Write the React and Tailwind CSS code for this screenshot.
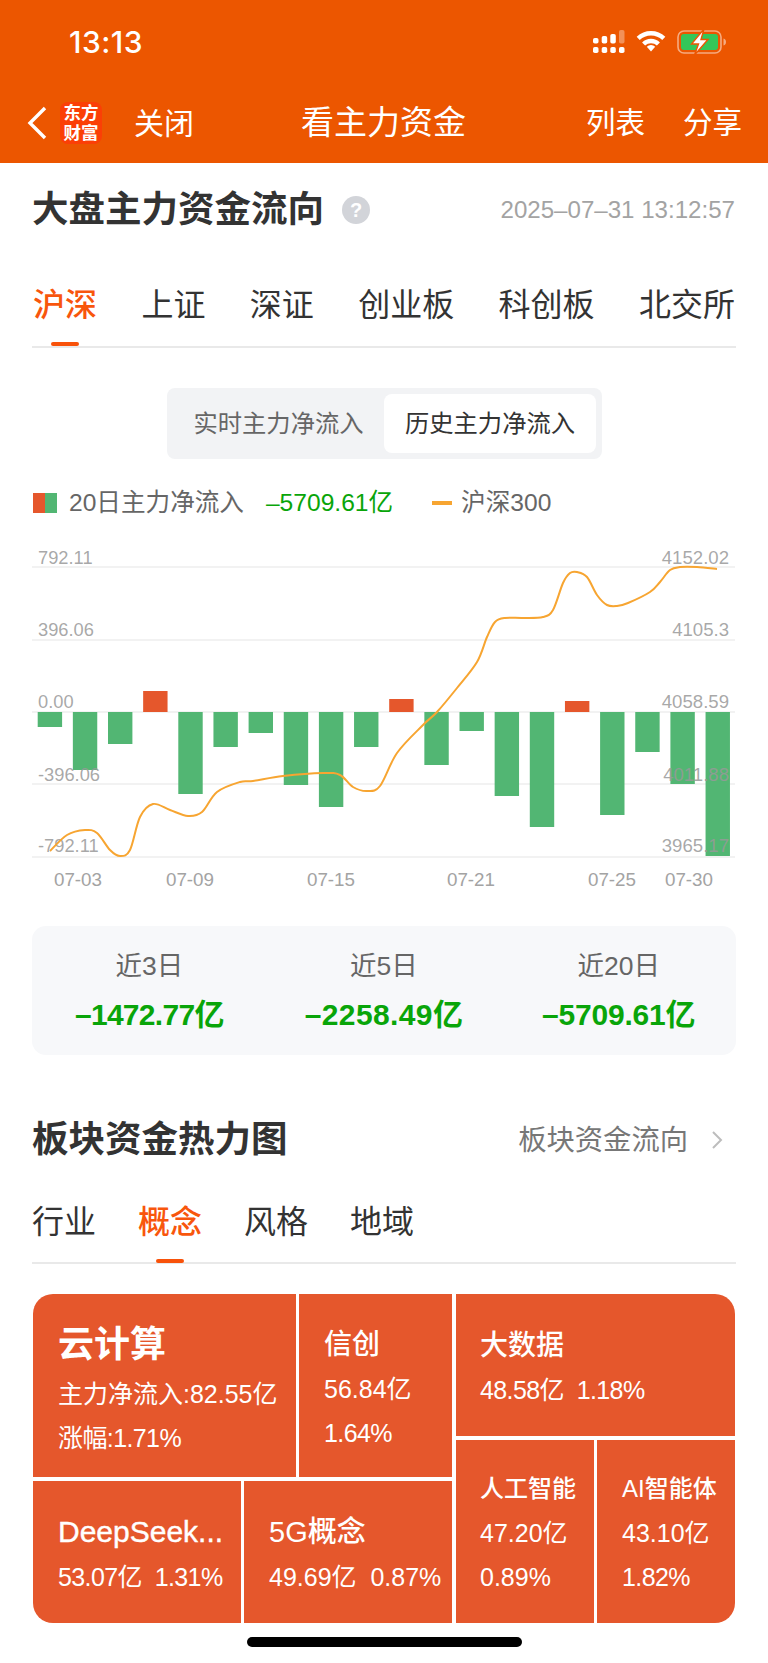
import { useMemo } from 'react'

const SANS = "font-['Liberation_Sans','Noto_Sans_CJK_SC',sans-serif]"

const bars = [-15, -58, -32, 21, -82, -35, -21, -73, -95, -35, 13, -53, -19, -84, -115, 11, -103, -40, -72, -144]

const indexLine = [
  [50, 851], [67, 835], [85, 830], [97, 833], [110, 850], [120, 856], [130, 850], [140, 817], [153, 804],
  [170, 810], [188, 816], [202, 812], [217, 792], [240, 782], [253, 781], [283, 776], [323, 773], [340, 775],
  [353, 787], [367, 791], [380, 786], [397, 753], [423, 725], [437, 712], [457, 688], [477, 662], [487, 637],
  [495, 622], [505, 618], [523, 618], [543, 617], [553, 610], [563, 583], [570, 573], [577, 572], [587, 577],
  [597, 595], [607, 605], [617, 606], [628, 603], [650, 592], [660, 582], [670, 570], [680, 567], [697, 567], [717, 569],
]

// catmull-rom through the points so the index line stays smooth
function smoothPath(pts) {
  let d = `M${pts[0][0]} ${pts[0][1]}`
  for (let i = 0; i < pts.length - 1; i++) {
    const p0 = pts[i - 1] || pts[i]
    const p1 = pts[i]
    const p2 = pts[i + 1]
    const p3 = pts[i + 2] || p2
    const c1x = p1[0] + (p2[0] - p0[0]) / 6
    const c1y = p1[1] + (p2[1] - p0[1]) / 6
    const c2x = p2[0] - (p3[0] - p1[0]) / 6
    const c2y = p2[1] - (p3[1] - p1[1]) / 6
    d += `C${c1x} ${c1y} ${c2x} ${c2y} ${p2[0]} ${p2[1]}`
  }
  return d
}

const gridY = [567, 640, 712, 784, 857]
const leftLabels = [['792.11', 564], ['396.06', 636], ['0.00', 708], ['-396.06', 781], ['-792.11', 852]]
const rightLabels = [['4152.02', 564], ['4105.3', 636], ['4058.59', 708], ['4011.88', 781], ['3965.17', 852]]
const dates = [['07-03', 78], ['07-09', 190], ['07-15', 331], ['07-21', 471], ['07-25', 612], ['07-30', 689]]

function FlowChart() {
  const line = useMemo(() => smoothPath(indexLine), [])
  // drawn in page coordinates, hence the viewBox offset
  return (
    <svg viewBox="0 540 768 360" className="block w-[768px] h-[360px] font-['Liberation_Sans',sans-serif]">
      {gridY.map(y => <rect key={y} x="32" y={y - 1} width="703" height="2" fill="#f2f2f2" />)}
      {bars.map((v, i) => (
        <rect
          key={i}
          x={37.7 + i * 35.15}
          y={v > 0 ? 712 - v : 712}
          width="24.4"
          height={Math.abs(v)}
          fill={v > 0 ? '#e5572c' : '#52b673'}
        />
      ))}
      {leftLabels.map(([t, y]) => <text key={t} x="38" y={y} fontSize="18.3" fill="#999" fillOpacity="0.85">{t}</text>)}
      {rightLabels.map(([t, y]) => <text key={t} x="729" y={y} fontSize="18.6" fill="#999" fillOpacity="0.85" textAnchor="end">{t}</text>)}
      <path d={line} fill="none" stroke="#f7a531" strokeWidth="2" />
      {dates.map(([t, x]) => <text key={t} x={x} y="886" fontSize="18.8" fill="#a3a3a3" textAnchor="middle">{t}</text>)}
    </svg>
  )
}

function SignalIcon() {
  return (
    <svg width="32" height="23" viewBox="0 0 32 23" fill="#fff">
      <rect x="0" y="8" width="5.500" height="5.500" rx="1.800" />
      <rect x="8.700" y="6" width="5.500" height="7.500" rx="1.800" />
      <rect x="17.300" y="4" width="5.500" height="9.500" rx="1.800" />
      <rect x="26" y="0" width="5.500" height="13.500" rx="1.800" fillOpacity="0.35" />
      {[0, 8.7, 17.3, 26].map(x => <rect key={x} x={x} y="17" width="5.500" height="6" rx="1.800" />)}
    </svg>
  )
}

function WifiIcon() {
  return (
    <svg width="30" height="22" viewBox="0 0 30 22" fill="none" stroke="#fff" strokeWidth="4.400">
      <path d="M2.200 8.400A18.500 18.500 0 0 1 27.800 8.400" />
      <path d="M7.600 14A10.700 10.700 0 0 1 22.400 14" />
      <path d="M15 21.600L10.800 16.800A5.600 5.600 0 0 1 19.200 16.800Z" fill="#fff" stroke="none" />
    </svg>
  )
}

function BatteryIcon() {
  return (
    <svg width="50" height="24" viewBox="0 0 50 24">
      <rect x="1" y="1" width="43" height="22" rx="6" fill="none" stroke="#fff" strokeOpacity="0.5" strokeWidth="1.600" />
      <rect x="4" y="4" width="37" height="16" rx="3" fill="#34c759" />
      <path d="M46.500 8.500C48.200 9 49 10.300 49 12C49 13.700 48.200 15 46.500 15.500Z" fill="#fff" fillOpacity="0.5" />
      <path d="M27 -1L14.500 14H21.500L17.500 25L31 9.500H24Z" fill="#fff" stroke="#ec5600" strokeWidth="1.400" />
    </svg>
  )
}

function TabRow({ items, active, className }) {
  return (
    <div className={`flex border-b-2 border-[#e9e9e9] ${className}`}>
      {items.map(item => (
        <div key={item} className={`relative text-[32px] leading-[44px] ${item === active ? 'text-[#f8560c] font-medium' : 'text-[#333]'}`}>
          {item}
          {item === active && (
            <span className="absolute left-1/2 -translate-x-1/2 top-[59px] w-[28px] h-[4px] rounded-full bg-[#f8520a]" />
          )}
        </div>
      ))}
    </div>
  )
}

function Stat({ label, value, valueClass }) {
  return (
    <div className="flex flex-col items-center">
      <span className="text-[26.5px] leading-[34px] text-[#666]">{label}</span>
      <span className={`mt-[14px] text-[30px] leading-[36px] font-bold text-[#09a509] ${valueClass}`}>{value}</span>
    </div>
  )
}

function Cell({ className = '', name, nameClass = 'text-[28px] leading-[38px] font-medium', lines, linesClass = 'mt-[8px]' }) {
  return (
    <div className={`bg-[#e5572c] text-white flex flex-col justify-center text-[25px] leading-[32px] whitespace-nowrap overflow-hidden ${className}`}>
      <div className={nameClass}>{name}</div>
      <div className={`${linesClass} flex flex-col gap-[12px]`}>
        {lines.map(l => (
          <div key={l} className={`whitespace-pre ${l.includes('1.') ? 'tracking-[-0.6px]' : ''}`}>{l}</div>
        ))}
      </div>
    </div>
  )
}

export default function App() {
  return (
    <div className={`${SANS} relative w-[768px] h-[1663px] overflow-hidden bg-white`}>
      <header className="h-[163px] bg-[#ec5600] text-white">
        <div className="h-[100px] relative">
          <span className="absolute left-[69px] top-[24px] text-[30px] leading-[36px] tracking-[0.5px] font-medium font-['Inter',sans-serif]">13:13</span>
          <div className="absolute left-[593px] top-[30px] flex items-start gap-[11px]">
            <SignalIcon />
            <WifiIcon />
            <BatteryIcon />
          </div>
        </div>
        <div className="relative h-[46px] flex items-center">
          <svg width="22" height="34" viewBox="0 0 22 34" className="ml-[26px]" fill="none" stroke="#fff" strokeWidth="3.400">
            <path d="M19 2L4 17L19 32" />
          </svg>
          <div className="ml-[12px] w-[42px] h-[42px] rounded-[8px] bg-[#fb3f06] text-[17.5px] leading-[20px] font-bold text-center flex flex-col justify-center">
            <span>东方</span>
            <span>财富</span>
          </div>
          <span className="ml-[32px] text-[30px]">关闭</span>
          <span className="absolute left-[301px] text-[33px]">看主力资金</span>
          <span className="absolute left-[586px] text-[29.5px]">列表</span>
          <span className="absolute left-[683px] text-[29.5px]">分享</span>
        </div>
      </header>

      <section className="px-[32px]">
        <div className="flex items-center h-[94px]">
          <h2 className="text-[36.5px] font-bold text-[#333]">大盘主力资金流向</h2>
          <span className="ml-[18px] w-[28px] h-[28px] rounded-full bg-[#d2d4d9] text-white text-[20px] font-bold flex items-center justify-center">?</span>
          <span className="ml-auto text-[24.1px] text-[#a3a3a3] mr-px">2025–07–31 13:12:57</span>
        </div>
        <TabRow
          items={['沪深', '上证', '深证', '创业板', '科创板', '北交所']}
          active="沪深"
          className="justify-between pt-[26px] h-[91px] px-px"
        />
        <div className="mt-[40px] w-[435px] h-[71px] ml-[135px] rounded-[8px] bg-[#f2f3f5] p-[6px] flex text-[24.3px]">
          <div className="w-[211px] flex items-center justify-center text-[#666] pt-px">实时主力净流入</div>
          <div className="w-[212px] rounded-[8px] bg-white flex items-center justify-center text-[#333] pt-px">历史主力净流入</div>
        </div>
        <div className="mt-[28px] h-[32px] flex items-center text-[24.6px] text-[#666] pl-px">
          <span className="w-[12px] h-[20px] bg-[#e5572c]" />
          <span className="w-[12px] h-[20px] bg-[#52b673]" />
          <span className="ml-[12px]">20日主力净流入</span>
          <span className="ml-[22px] text-[#09a509]">–5709.61亿</span>
          <span className="ml-[39px] w-[20px] h-[4px] bg-[#f7a531]" />
          <span className="ml-[9px]">沪深300</span>
        </div>
      </section>

      <div className="mt-[21px]">
        <FlowChart />
      </div>

      <section className="px-[32px]">
        <div className="mt-[26px] h-[129px] rounded-[14px] bg-[#f7f8fa] grid grid-cols-3 items-center">
          <Stat label="近3日" value="–1472.77亿" valueClass="tracking-[-0.7px]" />
          <Stat label="近5日" value="–2258.49亿" valueClass="tracking-[0.4px]" />
          <Stat label="近20日" value="–5709.61亿" valueClass="tracking-[-0.2px]" />
        </div>
        <div className="mt-[61px] flex items-center h-[48px]">
          <h2 className="text-[36.5px] font-bold text-[#333]">板块资金热力图</h2>
          <span className="ml-auto text-[28.3px] text-[#777]">板块资金流向</span>
          <svg width="12" height="20" viewBox="0 0 12 20" className="ml-[23px] mr-[13px]" fill="none" stroke="#bdbdbd" strokeWidth="2">
            <path d="M2 2L10 10L2 18" />
          </svg>
        </div>
        <TabRow
          items={['行业', '概念', '风格', '地域']}
          active="概念"
          className="mt-[36px] h-[64px] gap-[42px]"
        />
        <div className="mt-[30px] h-[329px] w-[702px] ml-px rounded-[20px] overflow-hidden flex gap-[4px]">
          <div className="w-[419px] flex flex-col gap-[4px]">
            <div className="h-[183px] flex gap-[3px]">
              <Cell
                className="w-[263px] pl-[25px] pt-[4px]"
                name="云计算"
                nameClass="text-[36px] leading-[46px] font-bold"
                linesClass="mt-[10px]"
                lines={['主力净流入:82.55亿', '涨幅:1.71%']}
              />
              <Cell className="flex-1 pl-[25px] pt-[3px]" name="信创" linesClass="mt-[9px]" lines={['56.84亿', '1.64%']} />
            </div>
            <div className="flex-1 flex gap-[3px]">
              <Cell
                className="w-[208px] pl-[25px] pt-[2px]"
                name="DeepSeek..."
                nameClass="text-[30px] leading-[38px] [-webkit-text-stroke:0.4px_white]"
                linesClass="mt-[10px]"
                lines={['53.07亿  1.31%']}
              />
              <Cell
                className="flex-1 pl-[25px] pt-[2px]"
                name="5G概念"
                nameClass="text-[29px] leading-[38px] font-medium"
                linesClass="mt-[10px]"
                lines={['49.69亿  0.87%']}
              />
            </div>
          </div>
          <div className="flex-1 flex flex-col gap-[4px]">
            <Cell className="h-[142px] pl-[24px] pt-[3px]" name="大数据" linesClass="mt-[9px]" lines={['48.58亿  1.18%']} />
            <div className="flex-1 flex gap-[3px]">
              <Cell className="w-[138px] pl-[24px] pt-[2px]" name="人工智能" nameClass="text-[24px] leading-[32px] font-medium" linesClass="mt-[12px]" lines={['47.20亿', '0.89%']} />
              <Cell className="flex-1 pl-[25px] pt-[2px]" name="AI智能体" nameClass="text-[24px] leading-[32px] font-medium" linesClass="mt-[12px]" lines={['43.10亿', '1.82%']} />
            </div>
          </div>
        </div>
      </section>

      <div className="absolute left-[247px] top-[1637px] w-[275px] h-[10px] rounded-full bg-black" />
    </div>
  )
}
